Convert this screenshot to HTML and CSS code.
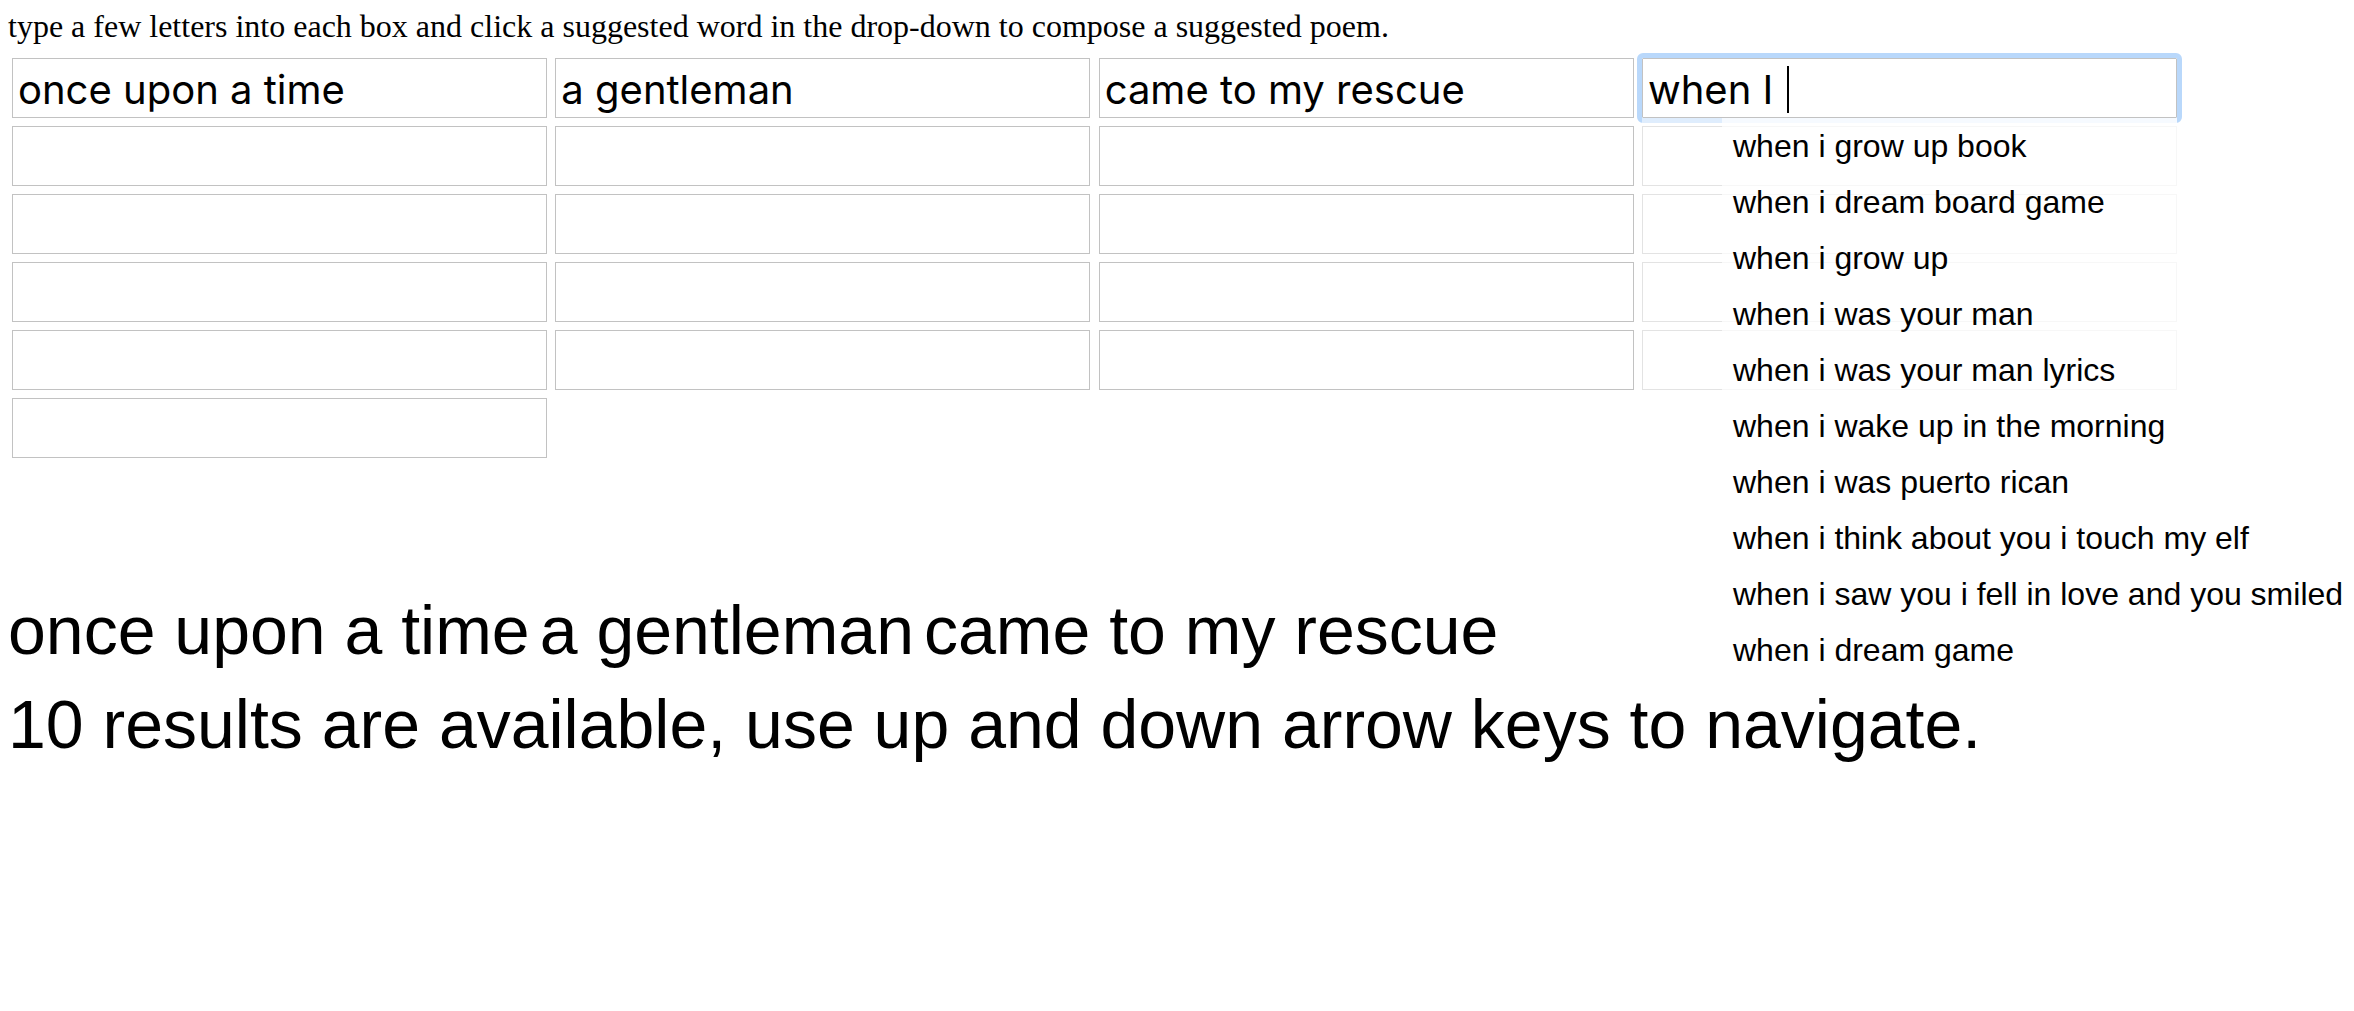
FILE: index.html
```html
<!DOCTYPE html>
<html lang="en">
<head>
<meta charset="utf-8">
<title>Suggested poem</title>
<link rel="stylesheet" href="styles.css">
</head>
<body>
<div class="intro">type a few letters into each box and click a suggested word in the drop-down to compose a suggested poem.</div>
<div class="grid">
  <input class="field" type="text" value="once upon a time">
  <input class="field" type="text" value="a gentleman">
  <input class="field" type="text" value="came to my rescue">
  <div class="cell">
    <div class="field focused"><span class="typed">when I&nbsp;</span><span class="caret"></span></div>
    <ul class="menu">
      <li>when i grow up book</li>
      <li>when i dream board game</li>
      <li>when i grow up</li>
      <li>when i was your man</li>
      <li>when i was your man lyrics</li>
      <li>when i wake up in the morning</li>
      <li>when i was puerto rican</li>
      <li>when i think about you i touch my elf</li>
      <li>when i saw you i fell in love and you smiled</li>
      <li>when i dream game</li>
    </ul>
  </div>
  <input class="field" type="text"><input class="field" type="text"><input class="field" type="text"><input class="field" type="text">
  <input class="field" type="text"><input class="field" type="text"><input class="field" type="text"><input class="field" type="text">
  <input class="field" type="text"><input class="field" type="text"><input class="field" type="text"><input class="field" type="text">
  <input class="field" type="text"><input class="field" type="text"><input class="field" type="text"><input class="field" type="text">
  <input class="field" type="text">
</div>
<div class="poem"><span class="word">once upon a time</span><span class="word">a gentleman</span><span class="word">came to my rescue</span></div>
<div class="status">10 results are available, use up and down arrow keys to navigate.</div>
</body>
</html>
```
FILE: styles.css
```css
html, body {
  background: #ffffff;
}
body {
  margin: 0;
  padding: 8px 8px 0 8px;
  font-family: "Liberation Serif", "Times New Roman", serif;
  font-size: 32px;
  color: #000;
}
.intro {
  line-height: 37px;
  height: 37px;
}
.grid {
  display: grid;
  grid-template-columns: repeat(4, 535px);
  grid-auto-rows: 60px;
  column-gap: 8.33px;
  row-gap: 8px;
  margin: 13px 0 0 4px;
}
.field {
  box-sizing: border-box;
  width: 535px;
  height: 60px;
  margin: 0;
  border: 1px solid #c2c2c2;
  border-radius: 0;
  padding: 3px 5px 0 5px;
  font-family: Inter, "Noto Sans", sans-serif;
  font-size: 40px;
  color: #000;
  background: #fff;
  outline: none;
}
.cell {
  position: relative;
  z-index: 2;
}
.focused {
  display: flex;
  align-items: center;
  border-radius: 1px;
  outline: 5px solid #b9d8fb;
  outline-offset: 0;
  white-space: pre;
}
.caret {
  display: inline-block;
  width: 2px;
  height: 47px;
  background: #000;
  margin-left: 2px;
}
.menu {
  position: absolute;
  top: 60px;
  left: 0;
  box-sizing: border-box;
  width: 535px;
  margin: 0;
  padding: 0 0 0 80px;
  list-style: none;
  background: rgba(255, 255, 255, 0.55);
  font-family: "Liberation Sans", Arial, sans-serif;
  font-size: 32px;
}
.menu li {
  height: 56px;
  line-height: 56px;
  padding-left: 11px;
  white-space: nowrap;
  background: rgba(255, 255, 255, 0.7);
}
.poem, .status {
  font-family: "Liberation Sans", Arial, sans-serif;
  font-size: 68px;
  line-height: 94px;
}
.poem {
  margin-top: 125px;
}
.word {
  margin-right: 10px;
}
```
